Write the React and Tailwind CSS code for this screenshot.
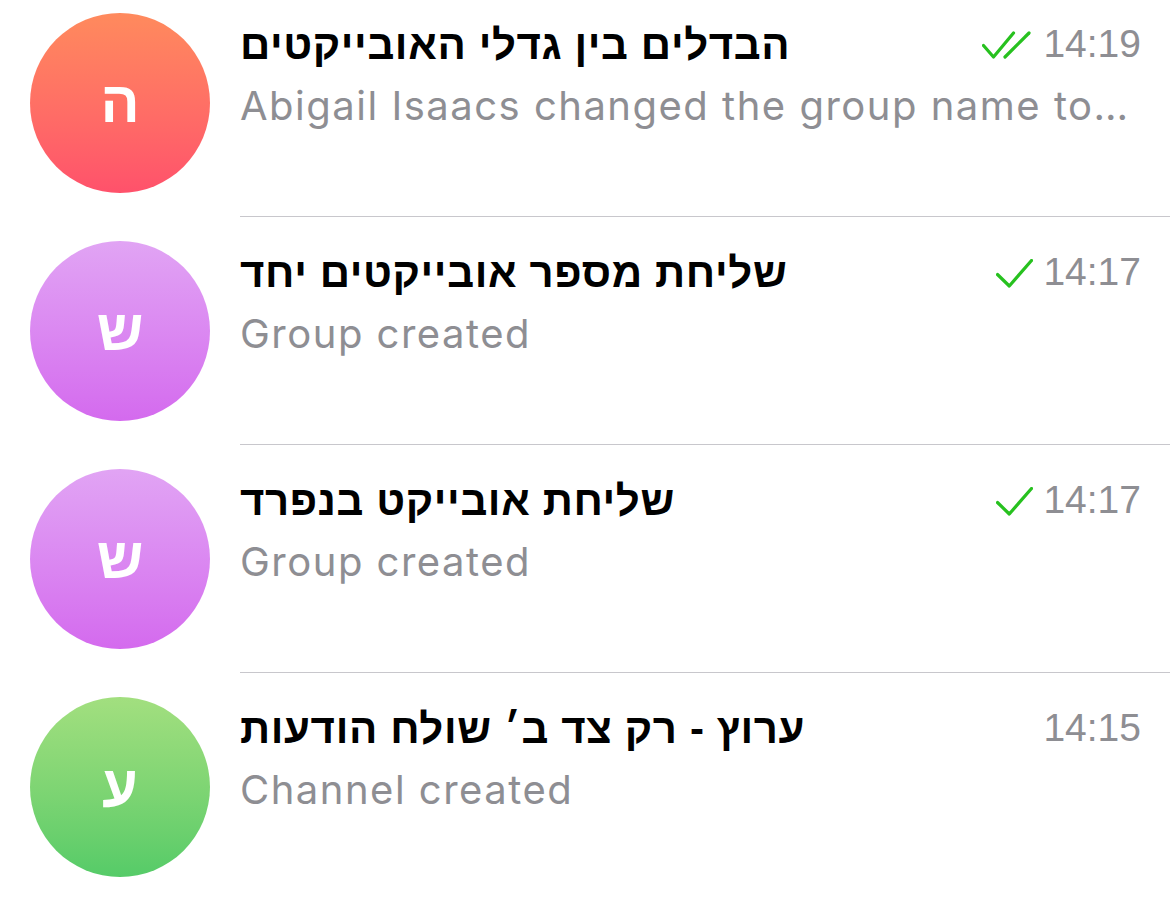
import React from 'react';

const chats = [
  {
    letter: 'ה',
    title: 'הבדלים בין גדלי האובייקטים',
    text: 'Abigail Isaacs changed the group name to…',
    time: '14:19',
    status: 'read',
    grad: 'bg-gradient-to-b from-[#ff8a5d] to-[#ff516b]',
  },
  {
    letter: 'ש',
    title: 'שליחת מספר אובייקטים יחד',
    text: 'Group created',
    time: '14:17',
    status: 'sent',
    grad: 'bg-gradient-to-b from-[#e1a4f4] to-[#d46aee]',
  },
  {
    letter: 'ש',
    title: 'שליחת אובייקט בנפרד',
    text: 'Group created',
    time: '14:17',
    status: 'sent',
    grad: 'bg-gradient-to-b from-[#e1a4f4] to-[#d46aee]',
  },
  {
    letter: 'ע',
    title: 'ערוץ - רק צד ב׳ שולח הודעות',
    text: 'Channel created',
    time: '14:15',
    status: null,
    grad: 'bg-gradient-to-b from-[#a2df7f] to-[#55cb68]',
  },
];

function Check() {
  return (
    <svg width="37" height="29" viewBox="0 0 37 29" fill="none" className="mr-[10px] mt-[2px]">
      <path d="M1.5 15.5 L13.3 27 L35.5 1.5" stroke="#27c11f" strokeWidth="3.2" strokeLinecap="round" strokeLinejoin="round" />
    </svg>
  );
}

function DoubleCheck() {
  return (
    <svg width="49" height="29" viewBox="0 0 49 29" fill="none" className="mr-[12px] mt-[2px]">
      <path d="M1.5 14.5 L11.5 26 L31.5 2" stroke="#27c11f" strokeWidth="3.2" strokeLinecap="round" strokeLinejoin="round" />
      <path d="M23 26 L47 2" stroke="#27c11f" strokeWidth="3.2" strokeLinecap="round" />
    </svg>
  );
}

export default function App() {
  return (
    <div className="w-[1170px] h-[897px] overflow-hidden bg-white font-['Inter','Liberation_Sans',sans-serif]">
      <div className="mt-[-11px]">
        {chats.map((c, i) => (
          <div key={i} className="flex h-[228px] pl-[30px]">
            <div className="self-center">
              <div className={`w-[180px] h-[180px] rounded-full ${c.grad} flex items-center justify-center`}>
                <span className="text-white text-[58px] font-bold leading-none font-['Liberation_Sans',sans-serif] mt-[-2px]">
                  {c.letter}
                </span>
              </div>
            </div>
            <div className={`flex-1 min-w-0 ml-[30px] pr-[29px] pt-[31px] ${i < chats.length - 1 ? 'border-b border-[#c8c7cc]' : ''}`}>
              <div className="flex items-center h-[48px]">
                <div className="flex-1 min-w-0 truncate">
                  <span dir="rtl" className="text-[42px] font-bold tracking-[0.6px] text-black font-['Liberation_Sans',sans-serif]">
                    {c.title}
                  </span>
                </div>
                {c.status === 'read' && <DoubleCheck />}
                {c.status === 'sent' && <Check />}
                <span className="text-[39px] text-[#8e8e93] font-['Liberation_Sans',sans-serif]">{c.time}</span>
              </div>
              <div className="mt-[14px] h-[48px] leading-[48px] text-[40px] tracking-[1.5px] text-[#8e8e93] truncate pr-[6px]">
                {c.text}
              </div>
            </div>
          </div>
        ))}
      </div>
    </div>
  );
}
